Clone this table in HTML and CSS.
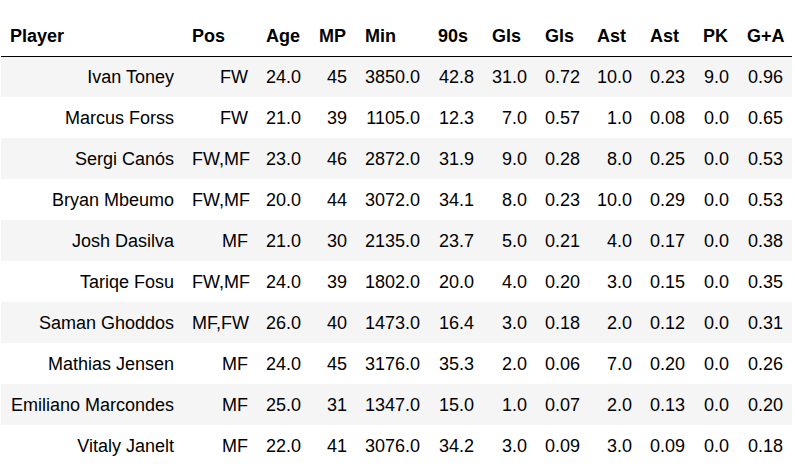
FILE: index.html
```html
<!DOCTYPE html>
<html lang="en">
<head>
<meta charset="utf-8">
<title>Players</title>
<link rel="stylesheet" href="styles.css">
</head>
<body>
<table class="df">
  <colgroup>
    <col class="c-player"><col class="c-pos"><col class="c-age"><col class="c-mp"><col class="c-min"><col class="c-90s"><col class="c-gls"><col class="c-gls2"><col class="c-ast"><col class="c-ast2"><col class="c-pk"><col class="c-ga">
  </colgroup>
  <thead>
    <tr class="head-row"><th>Player</th><th>Pos</th><th>Age</th><th>MP</th><th>Min</th><th>90s</th><th>Gls</th><th>Gls</th><th>Ast</th><th>Ast</th><th>PK</th><th>G+A</th></tr>
  </thead>
  <tbody>
    <tr><td>Ivan Toney</td><td>FW</td><td>24.0</td><td>45</td><td>3850.0</td><td>42.8</td><td>31.0</td><td>0.72</td><td>10.0</td><td>0.23</td><td>9.0</td><td>0.96</td></tr>
    <tr><td>Marcus Forss</td><td>FW</td><td>21.0</td><td>39</td><td>1105.0</td><td>12.3</td><td>7.0</td><td>0.57</td><td>1.0</td><td>0.08</td><td>0.0</td><td>0.65</td></tr>
    <tr><td>Sergi Canós</td><td>FW,MF</td><td>23.0</td><td>46</td><td>2872.0</td><td>31.9</td><td>9.0</td><td>0.28</td><td>8.0</td><td>0.25</td><td>0.0</td><td>0.53</td></tr>
    <tr><td>Bryan Mbeumo</td><td>FW,MF</td><td>20.0</td><td>44</td><td>3072.0</td><td>34.1</td><td>8.0</td><td>0.23</td><td>10.0</td><td>0.29</td><td>0.0</td><td>0.53</td></tr>
    <tr><td>Josh Dasilva</td><td>MF</td><td>21.0</td><td>30</td><td>2135.0</td><td>23.7</td><td>5.0</td><td>0.21</td><td>4.0</td><td>0.17</td><td>0.0</td><td>0.38</td></tr>
    <tr><td>Tariqe Fosu</td><td>FW,MF</td><td>24.0</td><td>39</td><td>1802.0</td><td>20.0</td><td>4.0</td><td>0.20</td><td>3.0</td><td>0.15</td><td>0.0</td><td>0.35</td></tr>
    <tr><td>Saman Ghoddos</td><td>MF,FW</td><td>26.0</td><td>40</td><td>1473.0</td><td>16.4</td><td>3.0</td><td>0.18</td><td>2.0</td><td>0.12</td><td>0.0</td><td>0.31</td></tr>
    <tr><td>Mathias Jensen</td><td>MF</td><td>24.0</td><td>45</td><td>3176.0</td><td>35.3</td><td>2.0</td><td>0.06</td><td>7.0</td><td>0.20</td><td>0.0</td><td>0.26</td></tr>
    <tr><td>Emiliano Marcondes</td><td>MF</td><td>25.0</td><td>31</td><td>1347.0</td><td>15.0</td><td>1.0</td><td>0.07</td><td>2.0</td><td>0.13</td><td>0.0</td><td>0.20</td></tr>
    <tr><td>Vitaly Janelt</td><td>MF</td><td>22.0</td><td>41</td><td>3076.0</td><td>34.2</td><td>3.0</td><td>0.09</td><td>3.0</td><td>0.09</td><td>0.0</td><td>0.18</td></tr>
  </tbody>
</table>
</body>
</html>
```
FILE: styles.css
```css
html, body {
  margin: 0;
  padding: 0;
  background: #fff;
}
body {
  padding: 16px 0 0 1px;
  font-family: "Liberation Sans", Arial, Helvetica, sans-serif;
  font-size: 18px;
  color: #000;
}
.df {
  border-collapse: collapse;
  border-spacing: 0;
  table-layout: fixed;
  width: 791px;
}
.c-player { width: 182px; }
.c-pos { width: 74px; }
.c-age { width: 53px; }
.c-mp { width: 46px; }
.c-min { width: 73px; }
.c-90s { width: 54px; }
.c-gls { width: 53px; }
.c-gls2 { width: 52px; }
.c-ast { width: 53px; }
.c-ast2 { width: 53px; }
.c-pk { width: 44px; }
.c-ga { width: 54px; }
.df th,
.df td {
  white-space: nowrap;
  vertical-align: middle;
  line-height: 21px;
}
.df th {
  padding: 1px 9px 0;
  text-align: left;
  font-weight: bold;
  border-bottom: 1px solid #000;
}
.head-row {
  height: 40px;
}
.df td {
  padding: 2px 9px 0;
  text-align: right;
}
.df tbody tr {
  height: 41px;
}
.df tbody tr:nth-child(odd) {
  background: #f5f5f5;
}
```
